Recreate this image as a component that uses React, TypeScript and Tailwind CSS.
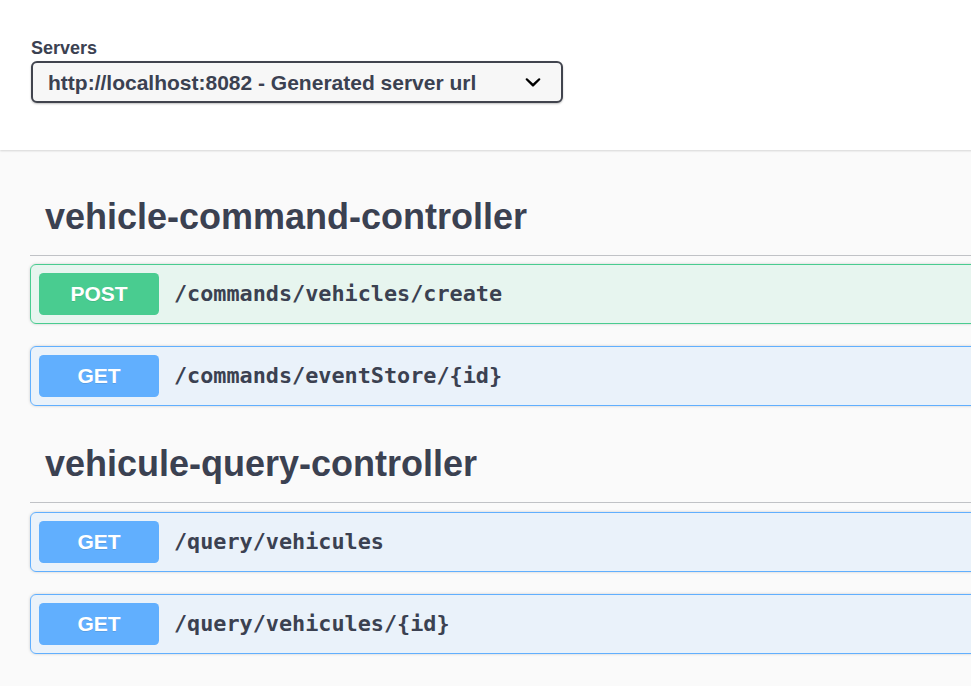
import React from 'react';

type Op = { method: 'POST' | 'GET'; path: string };

const SECTIONS: { name: string; ops: Op[] }[] = [
  {
    name: 'vehicle-command-controller',
    ops: [
      { method: 'POST', path: '/commands/vehicles/create' },
      { method: 'GET', path: '/commands/eventStore/{id}' },
    ],
  },
  {
    name: 'vehicule-query-controller',
    ops: [
      { method: 'GET', path: '/query/vehicules' },
      { method: 'GET', path: '/query/vehicules/{id}' },
    ],
  },
];

const OpRow: React.FC<{ op: Op }> = ({ op }) => {
  const isPost = op.method === 'POST';
  return (
    <div
      className={`mb-[22px] flex items-center rounded-[6px] border p-[8px] shadow-[0_0_3px_rgba(0,0,0,0.19)] ${
        isPost ? 'border-[#49cc90] bg-[#49cc90]/10' : 'border-[#61affe] bg-[#61affe]/10'
      }`}
    >
      <div
        className={`flex h-[42px] w-[120px] items-center justify-center rounded-[4.5px] text-[21px] font-bold text-white [text-shadow:0_1px_0_rgba(0,0,0,0.1)] ${
          isPost ? 'bg-[#49cc90]' : 'bg-[#61affe]'
        }`}
      >
        {op.method}
      </div>
      <span className="pl-[15px] font-['DejaVu_Sans_Mono',monospace] text-[21.8px] font-bold text-[#3b4151]">
        {op.path}
      </span>
    </div>
  );
};

export default function App() {
  return (
    <div className="h-screen w-full overflow-hidden bg-[#fafafa] font-['Liberation_Sans',Arial,sans-serif] text-[#3b4151]">
      <div className="w-[1500px]">
        {/* Servers */}
        <div className="relative h-[150px] bg-white pl-[31px] pt-[37px] shadow-[0_1px_2px_0_rgba(0,0,0,0.15)]">
          <div className="text-[18px] font-bold leading-[22px]">Servers</div>
          <div className="mt-[2px] flex h-[42px] w-[532px] items-center justify-between rounded-[6px] border-2 border-[#41444e] bg-[#f7f7f7] pl-[15px] pr-[12px] shadow-[0_1px_2px_0_rgba(0,0,0,0.25)]">
            <span className="text-[21px] font-bold leading-none">http://localhost:8082 - Generated server url</span>
            <svg width="32" height="32" viewBox="0 0 20 20" fill="#000">
              <path d="M13.418 7.859a.695.695 0 01.978 0 .68.68 0 010 .969l-3.908 3.83a.697.697 0 01-.979 0l-3.908-3.83a.68.68 0 010-.969.695.695 0 01.978 0L10 11z" />
            </svg>
          </div>
        </div>

        {/* Tag sections */}
        <div className="px-[30px]">
          {SECTIONS.map((s, i) => (
            <div key={s.name}>
              <h3
                className={`border-b border-[#3b4151]/30 pb-[17px] pl-[15px] pt-[13px] text-[36px] font-bold leading-[42px] ${
                  i === 0 ? 'mt-[33px] mb-[8px]' : 'mt-[24px] mb-[9px]'
                }`}
              >
                {s.name}
              </h3>
              {s.ops.map((op) => (
                <OpRow key={op.path} op={op} />
              ))}
            </div>
          ))}
        </div>
      </div>
    </div>
  );
}
